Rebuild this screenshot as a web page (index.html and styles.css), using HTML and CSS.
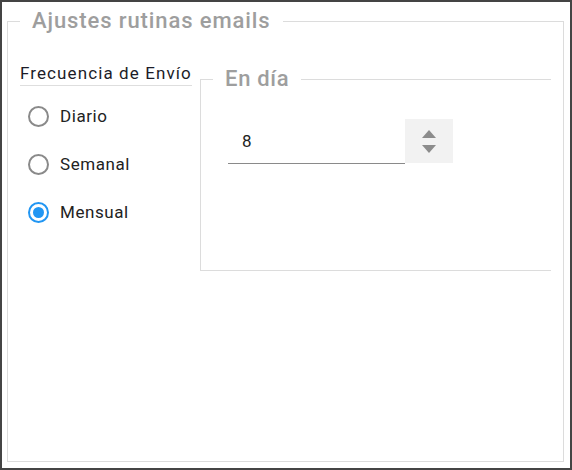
FILE: index.html
```html
<!DOCTYPE html>
<html lang="es">
<head>
<meta charset="utf-8">
<title>Ajustes rutinas emails</title>
<link rel="stylesheet" href="styles.css">
</head>
<body>
<div class="frame">
  <fieldset class="panel">
    <legend class="panel-title">Ajustes rutinas emails</legend>
    <div class="columns">
      <div class="freq">
        <div class="freq-title">Frecuencia de Envío</div>
        <label class="radio-row"><span class="radio"></span><span class="radio-label">Diario</span></label>
        <label class="radio-row"><span class="radio"></span><span class="radio-label">Semanal</span></label>
        <label class="radio-row"><span class="radio checked"></span><span class="radio-label">Mensual</span></label>
      </div>
      <fieldset class="day">
        <legend class="day-title">En día</legend>
        <div class="num-field">
          <input class="num-input" type="text" value="8">
          <div class="spinner">
            <svg width="14" height="24" viewBox="0 0 14 24">
              <polygon points="7,0 14,8 0,8" fill="#8c8c8c"/>
              <polygon points="0,15 14,15 7,23" fill="#8c8c8c"/>
            </svg>
          </div>
        </div>
      </fieldset>
    </div>
  </fieldset>
</div>
</body>
</html>
```
FILE: styles.css
```css
* { box-sizing: border-box; }
html, body { margin: 0; padding: 0; background: #fff; }
body { font-family: Roboto, "Liberation Sans", Arial, sans-serif; }
.frame {
  width: 572px;
  height: 470px;
  border: 2px solid #444;
  display: flex;
  flex-direction: column;
  background: #fff;
}
.panel {
  flex: 1;
  margin: 6px 6px 6px 5px;
  border: 1px solid #dcdcdc;
  padding: 29px 12px 0 12px;
  min-width: 0;
}
.panel-title, .day-title {
  font-size: 22px;
  font-weight: 500;
  color: #9e9e9e;
  padding: 0 12px;
  line-height: 26px;
}
.panel-title { letter-spacing: 0.9px; }
.day-title { letter-spacing: 0.7px; }
.columns {
  display: flex;
  align-items: flex-start;
  gap: 8px;
}
.freq {
  width: 172px;
  flex: none;
}
.freq-title {
  font-size: 17px;
  line-height: 20px;
  letter-spacing: 1.1px;
  color: #1c1c28;
  padding-bottom: 2px;
  border-bottom: 1px solid #dedede;
  white-space: nowrap;
}
.radio-row {
  display: flex;
  align-items: center;
  height: 48px;
  padding-left: 8px;
  gap: 11px;
}
.freq-title + .radio-row { margin-top: 6px; }
.radio {
  width: 21px;
  height: 21px;
  border: 2px solid #8a8a8a;
  border-radius: 50%;
  display: flex;
  align-items: center;
  justify-content: center;
  flex: none;
}
.radio.checked { border-color: #2196f3; }
.radio.checked::after {
  content: "";
  width: 11px;
  height: 11px;
  border-radius: 50%;
  background: #2196f3;
}
.radio-label {
  font-size: 17px;
  line-height: 20px;
  letter-spacing: 0.55px;
  color: #222;
}
.day {
  flex: 1;
  margin: 3px 0 0 0;
  border: 1px solid #dcdcdc;
  border-right: none;
  padding: 27px 0 106px 12px;
  min-width: 0;
}
.num-field {
  display: flex;
  margin-left: 15px;
  height: 45px;
}
.num-input {
  width: 177px;
  height: 45px;
  border: none;
  border-bottom: 1px solid #8a8a8a;
  padding: 0 0 0 14px;
  font-family: Roboto, "Liberation Sans", Arial, sans-serif;
  font-size: 17px;
  line-height: 20px;
  color: #222;
  outline: none;
  background: transparent;
}
.spinner {
  width: 48px;
  height: 44px;
  background: #f2f2f2;
  display: flex;
  align-items: center;
  justify-content: center;
}
.spinner svg { display: block; margin-top: 1px; }
```
